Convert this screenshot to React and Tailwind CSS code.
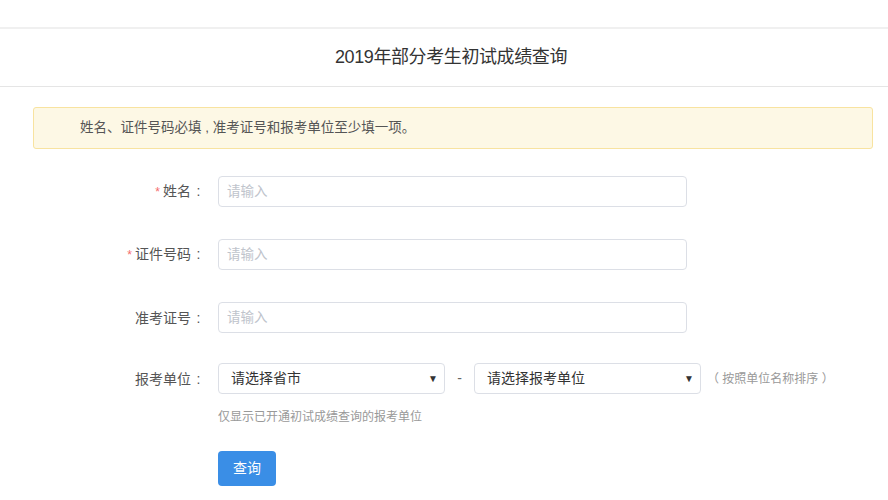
import React from 'react';

const font = { fontFamily: '"Liberation Sans", "Noto Sans CJK SC", sans-serif' };

const Row = ({ label, required, children, className = '' }) => (
  <div className={`flex items-center gap-[12px] ${className}`}>
    <div className="w-[173px] text-right text-[14px] text-[#555] leading-[20px]">
      {required && <span className="text-[#f56c6c] mr-[3px] text-[12px]">*</span>}
      {label}
      <span className="inline-block w-[15px] text-center">:</span>
    </div>
    {children}
  </div>
);

const TextInput = () => (
  <input
    type="text"
    placeholder="请输入"
    className="w-[469px] h-[31px] border border-[#dcdfe6] rounded-[4px] px-[8px] text-[13.5px] text-[#333] placeholder:text-[#c0c4cc] outline-none"
  />
);

const Select = ({ text }) => (
  <div className="w-[227px] h-[31px] border border-[#dcdfe6] rounded-[4px] pl-[12px] pr-[6px] flex items-center justify-between bg-white">
    <span className="text-[14px] text-[#333]">{text}</span>
    <span className="text-[10px] text-[#333]">▼</span>
  </div>
);

export default function App() {
  return (
    <div className="w-[888px] h-[500px] bg-white overflow-hidden" style={font}>
      <div className="h-[27px]" />
      <div className="h-[60px] pl-[14px] border-t-2 border-[#f0f0f0] border-b border-b-[#e5e5e5] flex items-center justify-center">
        <h1 className="text-[18px] text-[#333] tracking-[-0.4px]">2019年部分考生初试成绩查询</h1>
      </div>

      <div className="pl-[33px] pr-[15px] pt-[20px]">
        <div className="h-[42px] border border-[#f8e3a0] bg-[#fdf8e5] rounded-[3px] pl-[46px] flex items-center text-[13.5px] text-[#555]">
          姓名、证件号码必填 , 准考证号和报考单位至少填一项。
        </div>

        <div className="mt-[27px] flex flex-col">
          <Row label="姓名" required>
            <TextInput />
          </Row>
          <Row label="证件号码" required className="mt-[32px]">
            <TextInput />
          </Row>
          <Row label="准考证号" className="mt-[32px]">
            <TextInput />
          </Row>
          <Row label="报考单位" className="mt-[30px]">
            <div className="flex items-center">
              <Select text="请选择省市" />
              <span className="w-[29px] text-center text-[14px] text-[#666]">-</span>
              <Select text="请选择报考单位" />
              <span className="ml-[6px] text-[12px] text-[#999]">（ 按照单位名称排序 ）</span>
            </div>
          </Row>
          <div className="ml-[185px] mt-[15px] text-[12px] leading-[17px] text-[#999]">
            仅显示已开通初试成绩查询的报考单位
          </div>
          <div className="ml-[185px] mt-[25px]">
            <button className="w-[58px] h-[35px] bg-[#3a8ee6] rounded-[4px] text-white text-[14px]">
              查询
            </button>
          </div>
        </div>
      </div>
    </div>
  );
}
